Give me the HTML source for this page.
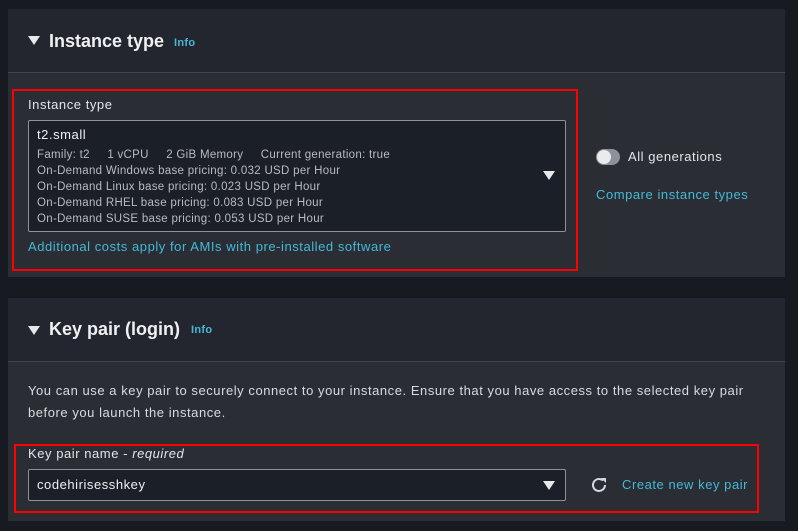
<!DOCTYPE html>
<html><head><style>
*{box-sizing:border-box;margin:0;padding:0}
body{width:798px;height:531px;background:#171a21;font-family:"Liberation Sans",sans-serif;position:relative;overflow:hidden;color:#d1d5db;letter-spacing:0.55px}
.abs{position:absolute}
.panel{position:absolute;left:8px;width:777px;background:#2a2d34}
.hdr{position:absolute;left:0;top:0;width:100%;background:#23262e;border-bottom:1px solid #41454c}
.tri{position:absolute;width:0;height:0;border-left:6px solid transparent;border-right:6px solid transparent;border-top:9px solid #e6e8ea}
.h2{position:absolute;font-size:18px;font-weight:bold;color:#eef0f2;letter-spacing:0}
.info{position:absolute;font-size:11px;font-weight:bold;color:#44b9d6;letter-spacing:0.3px}
.red{position:absolute;border:2px solid #f00}
.sel{position:absolute;background:#1b1f27;border:1px solid #8d9199;border-radius:2px}
.link{color:#44b9d6}
.sm{font-size:11.5px;color:#b8bcc1;line-height:16px;letter-spacing:0.3px}
.dd{position:absolute;width:0;height:0;border-left:6px solid transparent;border-right:6px solid transparent;border-top:9px solid #e6e8ea}
</style></head><body>
<div class="panel" style="top:9px;height:268px">
  <div class="hdr" style="height:64px"></div>
  <div class="tri" style="left:20px;top:27px"></div>
  <div class="h2" style="left:41px;top:22px">Instance type</div>
  <div class="info" style="left:166px;top:28px">Info</div>
</div>
<div class="red" style="left:12px;top:89px;width:566px;height:182px"></div>
<div class="abs" style="left:28px;top:97px;font-size:13px;color:#e3e5e8">Instance type</div>
<div class="sel" style="left:28px;top:120px;width:538px;height:112px"></div>
<div class="abs" style="left:37px;top:127px;font-size:13px;color:#eef0f2">t2.small</div>
<div class="abs sm" style="left:37px;top:147px">Family: t2&nbsp;&nbsp;&nbsp;&nbsp;&nbsp;1 vCPU&nbsp;&nbsp;&nbsp;&nbsp;&nbsp;2 GiB Memory&nbsp;&nbsp;&nbsp;&nbsp;&nbsp;Current generation: true<br>On-Demand Windows base pricing: 0.032 USD per Hour<br>On-Demand Linux base pricing: 0.023 USD per Hour<br>On-Demand RHEL base pricing: 0.083 USD per Hour<br>On-Demand SUSE base pricing: 0.053 USD per Hour</div>
<div class="dd" style="left:543px;top:171px"></div>
<div class="abs link" style="left:28px;top:239px;font-size:13px">Additional costs apply for AMIs with pre-installed software</div>
<div class="abs" style="left:596px;top:149px;width:24px;height:16px;border-radius:8px;background:#8d9199"></div>
<div class="abs" style="left:597px;top:150px;width:14px;height:14px;border-radius:7px;background:#e9ebed"></div>
<div class="abs" style="left:628px;top:149px;font-size:13px;color:#e3e5e8">All generations</div>
<div class="abs link" style="left:596px;top:187px;font-size:13px">Compare instance types</div>

<div class="panel" style="top:298px;height:223px">
  <div class="hdr" style="height:64px"></div>
  <div class="tri" style="left:20px;top:28px"></div>
  <div class="h2" style="left:41px;top:21px">Key pair (login)</div>
  <div class="info" style="left:183px;top:26px">Info</div>
</div>
<div class="abs" style="left:28px;top:380px;font-size:13px;line-height:22px;color:#d8dbde;width:720px">You can use a key pair to securely connect to your instance. Ensure that you have access to the selected key pair before you launch the instance.</div>
<div class="red" style="left:14px;top:444px;width:745px;height:69px"></div>
<div class="abs" style="left:28px;top:446px;font-size:13px;color:#e3e5e8">Key pair name - <i>required</i></div>
<div class="sel" style="left:28px;top:469px;width:538px;height:32px"></div>
<div class="abs" style="left:37px;top:477px;font-size:13px;color:#eef0f2">codehirisesshkey</div>
<div class="dd" style="left:543px;top:481px"></div>
<svg class="abs" style="left:590px;top:476px" width="18" height="18" viewBox="0 0 18 18"><path d="M15 9a6 6 0 1 1-2-4.5" fill="none" stroke="#d5d8dc" stroke-width="2"/><path d="M11 2h5v5z" fill="#d5d8dc"/></svg>
<div class="abs link" style="left:622px;top:477px;font-size:13px">Create new key pair</div>
</body></html>
